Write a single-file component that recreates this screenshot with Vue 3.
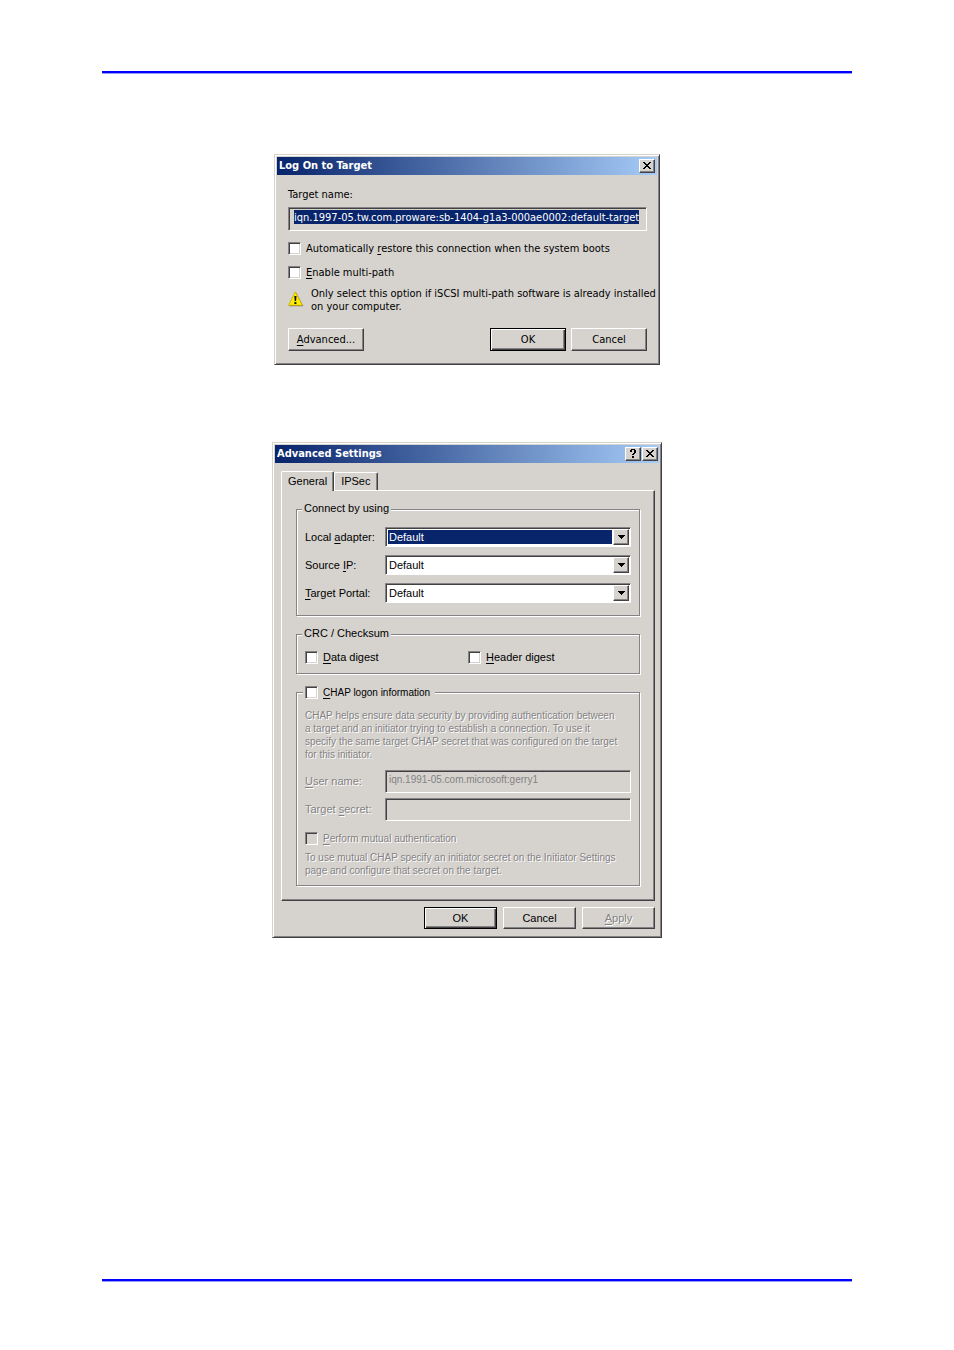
<template>
  <div class="page">
    <hr class="rule" />

    <main class="content">
      <section class="dialog logon" aria-label="Log On to Target">
        <header class="title-bar">
          <h2 class="title">Log On to Target</h2>
          <button type="button" class="caption-btn" aria-label="Close">
            <svg viewBox="0 0 8 7" width="8" height="7" shape-rendering="crispEdges">
              <path :d="closeIcon" />
            </svg>
          </button>
        </header>

        <div class="logon-body">
          <label for="target-name" class="target-label">Target name:</label>
          <input id="target-name" v-model="targetName" type="text" class="field target-input" readonly />

          <label class="check">
            <input v-model="autoRestore" type="checkbox" />
            <span>Automatically <u>r</u>estore this connection when the system boots</span>
          </label>
          <label class="check">
            <input v-model="multiPath" type="checkbox" />
            <span><u>E</u>nable multi-path</span>
          </label>

          <div class="warning">
            <svg viewBox="0 0 16 16" width="16" height="16">
              <path d="M8 1.5L15.4 15.2H1.2z" fill="#77776a" />
              <path d="M7.3 .8L14.4 14.3H.6z" fill="#ffee00" stroke="#c9a800" stroke-width=".8" stroke-linejoin="round" />
              <path d="M6.3 5h2.2l-.4 5H6.7zM6.4 11h2v2h-2z" fill="#111" />
            </svg>
            <p>Only select this option if iSCSI multi-path software is already installed<br />on your computer.</p>
          </div>

          <div class="buttons">
            <button type="button" class="btn first"><u>A</u>dvanced...</button>
            <button type="button" class="btn default">OK</button>
            <button type="button" class="btn">Cancel</button>
          </div>
        </div>
      </section>

      <section class="dialog advanced" aria-label="Advanced Settings">
        <header class="title-bar">
          <h2 class="title">Advanced Settings</h2>
          <button type="button" class="caption-btn" aria-label="Help">
            <svg viewBox="0 0 6 9" width="6" height="9" shape-rendering="crispEdges">
              <path d="M1 0h4v1H1zM0 1h2v2H0zM4 1h2v3H4zM3 4h2v1H3zM2 5h2v1H2zM2 7h2v2H2z" />
            </svg>
          </button>
          <button type="button" class="caption-btn" aria-label="Close">
            <svg viewBox="0 0 8 7" width="8" height="7" shape-rendering="crispEdges">
              <path :d="closeIcon" />
            </svg>
          </button>
        </header>

        <div class="advanced-body">
          <div class="tabs" role="tablist">
            <button
              v-for="tab in tabs"
              :key="tab"
              type="button"
              role="tab"
              class="tab"
              :class="{ active: tab === activeTab }"
              :aria-selected="tab === activeTab"
              @click="activeTab = tab"
            >{{ tab }}</button>
          </div>

          <div class="panel" role="tabpanel">
            <fieldset class="group connect">
              <legend>Connect by using</legend>
              <div v-for="row in connectRows" :key="row.id" class="form-row">
                <label :for="row.id">{{ row.before }}<u>{{ row.key }}</u>{{ row.after }}</label>
                <div class="combo" :class="{ focused: row.focused }">
                  <select :id="row.id" v-model="row.value">
                    <option>Default</option>
                  </select>
                  <span class="arrow">
                    <svg viewBox="0 0 7 4" width="7" height="4" shape-rendering="crispEdges">
                      <path d="M0 0h7v1H0zM1 1h5v1H1zM2 2h3v1H2zM3 3h1v1H3z" />
                    </svg>
                  </span>
                </div>
              </div>
            </fieldset>

            <fieldset class="group crc">
              <legend>CRC / Checksum</legend>
              <label class="check">
                <input v-model="dataDigest" type="checkbox" />
                <span><u>D</u>ata digest</span>
              </label>
              <label class="check">
                <input v-model="headerDigest" type="checkbox" />
                <span><u>H</u>eader digest</span>
              </label>
            </fieldset>

            <fieldset class="group chap">
              <legend>
                <label class="check">
                  <input v-model="chap" type="checkbox" />
                  <span><u>C</u>HAP logon information</span>
                </label>
              </legend>
              <p class="off">
                CHAP helps ensure data security by providing authentication between<br />
                a target and an initiator trying to establish a connection. To use it<br />
                specify the same target CHAP secret that was configured on the target<br />
                for this initiator.
              </p>
              <div class="form-row user">
                <label for="user-name" class="off"><u>U</u>ser name:</label>
                <input id="user-name" v-model="userName" type="text" class="field" :disabled="!chap" />
              </div>
              <div class="form-row secret">
                <label for="target-secret" class="off">Target <u>s</u>ecret:</label>
                <input id="target-secret" v-model="secret" type="password" class="field" :disabled="!chap" />
              </div>
              <label class="check off mutual">
                <input v-model="mutual" type="checkbox" :disabled="!chap" />
                <span><u>P</u>erform mutual authentication</span>
              </label>
              <p class="off">
                To use mutual CHAP specify an initiator secret on the Initiator Settings<br />
                page and configure that secret on the target.
              </p>
            </fieldset>
          </div>

          <div class="buttons">
            <button type="button" class="btn default">OK</button>
            <button type="button" class="btn">Cancel</button>
            <button type="button" class="btn off" disabled><u>A</u>pply</button>
          </div>
        </div>
      </section>
    </main>

    <hr class="rule" />
  </div>
</template>

<script setup>
import { ref } from 'vue'

const closeIcon =
  'M0 0h2v1H0zM6 0h2v1H6zM1 1h2v1H1zM5 1h2v1H5zM2 2h4v1H2zM3 3h2v1H3zM2 4h4v1H2zM1 5h2v1H1zM5 5h2v1H5zM0 6h2v1H0zM6 6h2v1H6z'

// Log On to Target
const targetName = ref('iqn.1997-05.tw.com.proware:sb-1404-g1a3-000ae0002:default-target')
const autoRestore = ref(false)
const multiPath = ref(false)

// Advanced Settings
const tabs = ['General', 'IPSec']
const activeTab = ref('General')
const connectRows = ref([
  { id: 'local-adapter', before: 'Local ', key: 'a', after: 'dapter:', value: 'Default', focused: true },
  { id: 'source-ip', before: 'Source ', key: 'I', after: 'P:', value: 'Default', focused: false },
  { id: 'target-portal', before: '', key: 'T', after: 'arget Portal:', value: 'Default', focused: false }
])
const dataDigest = ref(false)
const headerDigest = ref(false)
const chap = ref(false)
const userName = ref('iqn.1991-05.com.microsoft:gerry1')
const secret = ref('')
const mutual = ref(false)
</script>

<style>
body {
  background: #ffffff;
}
</style>

<style scoped>
.page {
  box-sizing: border-box;
  min-height: 100vh;
  padding: 71px 102px 68px;
  display: flex;
  flex-direction: column;
}

.rule {
  width: 100%;
  height: 2px;
  margin: 0;
  border: 0;
  border-bottom: 1px solid #9a9aff;
  background: #0000ff;
}

.content {
  flex: 1;
  display: flex;
  flex-direction: column;
  align-items: center;
  gap: 77px;
  padding: 80px 20px 80px 0;
}

/* window frame */
.dialog {
  box-sizing: border-box;
  max-width: 100%;
  padding: 1px;
  border: 1px solid;
  border-color: #d6d3ce #424142 #424142 #d6d3ce;
  box-shadow: inset 1px 1px 0 #ffffff, inset -1px -1px 0 #848284;
  background: #d6d3ce;
  color: #000000;
  font-size: 11px;
  line-height: 13px;
}

.logon {
  width: 386px;
  font-family: "DejaVu Sans Condensed", "DejaVu Sans", sans-serif;
}

.advanced {
  width: 390px;
  font-family: "Liberation Sans", Arial, sans-serif;
}

.title-bar {
  display: flex;
  align-items: center;
  height: 18px;
  margin: 1px;
  padding: 0 2px;
  background: linear-gradient(to right, #08246b, #a5cbf7);
}

.title {
  flex: 1;
  margin: 0;
  font: bold 11px/18px "DejaVu Sans Condensed", "DejaVu Sans", sans-serif;
  color: #ffffff;
}

button,
input,
select {
  box-sizing: border-box;
  margin: 0;
  font: inherit;
  color: inherit;
}

.caption-btn,
.btn,
.arrow {
  border: 1px solid;
  border-color: #ffffff #424142 #424142 #ffffff;
  box-shadow: inset -1px -1px 0 #848284;
  background: #d6d3ce;
}

.caption-btn {
  display: flex;
  align-items: center;
  justify-content: center;
  width: 16px;
  height: 14px;
  padding: 0 1px 1px 0;
}

.caption-btn + .caption-btn {
  margin-left: 1px;
}

u {
  text-underline-offset: 2px;
}

p {
  margin: 0;
  white-space: nowrap;
}

.field,
.combo {
  border: 1px solid;
  border-color: #848284 #ffffff #ffffff #848284;
  box-shadow: inset 1px 1px 0 #424142;
}

.field {
  width: 100%;
  padding: 1px 3px 5px;
  border-radius: 0;
  background: #d6d3ce;
  outline: 0;
}

.field:disabled {
  color: #848284;
}

.check {
  display: flex;
  align-items: center;
  gap: 5px;
  height: 14px;
  white-space: nowrap;
}

.check input {
  appearance: none;
  flex: none;
  width: 13px;
  height: 13px;
  border: 1px solid;
  border-color: #848284 #ffffff #ffffff #848284;
  box-shadow: inset 1px 1px 0 #424142, inset -1px -1px 0 #d6d3ce;
  background: #ffffff;
}

.check input:disabled {
  background: #d6d3ce;
}

.off {
  color: #848284;
  text-shadow: 1px 1px 0 #ffffff;
}

.buttons {
  display: flex;
  justify-content: flex-end;
}

.btn {
  padding: 0;
  text-align: center;
}

.btn.default {
  border-color: #000000;
  box-shadow: inset 1px 1px 0 #ffffff, inset -1px -1px 0 #424142, inset -2px -2px 0 #848284;
}

/* Log On to Target */
.logon-body {
  display: flex;
  flex-direction: column;
  padding: 12px 11px 12px 12px;
}

.target-label {
  margin-bottom: 6px;
}

.target-input {
  height: 24px;
  margin-bottom: 10px;
  padding: 2px 7px 6px 5px;
  background: #08246b content-box;
  color: #ffffff;
}

.logon .check {
  margin-bottom: 10px;
}

.logon .check + .check {
  margin-bottom: 8px;
}

.warning {
  display: flex;
  gap: 7px;
  margin-bottom: 15px;
}

.warning svg {
  flex: none;
  margin-top: 4px;
  margin-bottom: -4px;
}

.logon .btn {
  width: 76px;
  height: 23px;
}

.logon .buttons {
  gap: 5px;
}

.logon .first {
  margin-right: auto;
}

/* Advanced Settings */
.advanced .title-bar {
  padding-right: 1px;
}

.advanced-body {
  padding: 7px 5px 7px 7px;
}

.tabs {
  display: flex;
  align-items: flex-end;
  height: 19px;
}

.tab {
  height: 18px;
  padding: 0 6px;
  border: 1px solid;
  border-color: #ffffff #424142 transparent #ffffff;
  border-bottom: 0;
  border-radius: 2px 2px 0 0;
  box-shadow: inset -1px 0 0 #848284;
  background: #d6d3ce;
}

.tab.active {
  z-index: 1;
  height: 20px;
  margin-bottom: -1px;
}

.panel {
  padding: 11px 14px 14px;
  border: 1px solid;
  border-color: #ffffff #424142 #424142 #ffffff;
  box-shadow: inset -1px -1px 0 #848284;
}

.group {
  min-width: 0;
  margin: 0 0 11px;
  padding: 0 8px;
  border: 1px solid #848284;
  box-shadow: 1px 1px 0 #ffffff, inset 1px 1px 0 #ffffff;
}

.group:last-child {
  margin-bottom: 0;
}

legend {
  height: 14px;
  margin-left: -3px;
  padding: 0 2px;
  background: #d6d3ce;
}

.form-row {
  display: grid;
  grid-template-columns: 80px 1fr;
  align-items: center;
  white-space: nowrap;
}

.connect {
  display: grid;
  gap: 8px;
  padding-top: 11px;
  padding-bottom: 12px;
}

.combo {
  display: flex;
  box-sizing: border-box;
  height: 20px;
  padding: 1px;
  background: #ffffff;
}

.combo select {
  appearance: none;
  flex: 1;
  min-width: 0;
  padding: 0 1px;
  border: 1px solid #ffffff;
  border-radius: 0;
  background: #ffffff;
  outline: 0;
}

.combo.focused select {
  background: #08246b;
  color: #ffffff;
}

.arrow {
  display: flex;
  align-items: center;
  justify-content: center;
  width: 14px;
  pointer-events: none;
}

.crc {
  display: grid;
  grid-template-columns: 1fr 1fr;
  padding-top: 9px;
  padding-bottom: 9px;
}

.chap {
  padding-top: 10px;
  padding-bottom: 8px;
}

.chap legend {
  margin-left: -2px;
  padding-right: 5px;
}

.chap p,
.chap .check,
.chap .field {
  font-size: 10px;
}

.advanced .field {
  height: 23px;
}

.user {
  margin-top: 9px;
}

.secret {
  margin-top: 5px;
}

.mutual {
  margin: 10px 0 6px;
}

.advanced .buttons {
  gap: 6px;
  margin-top: 6px;
}

.advanced .btn {
  width: 73px;
  height: 22px;
}
</style>
